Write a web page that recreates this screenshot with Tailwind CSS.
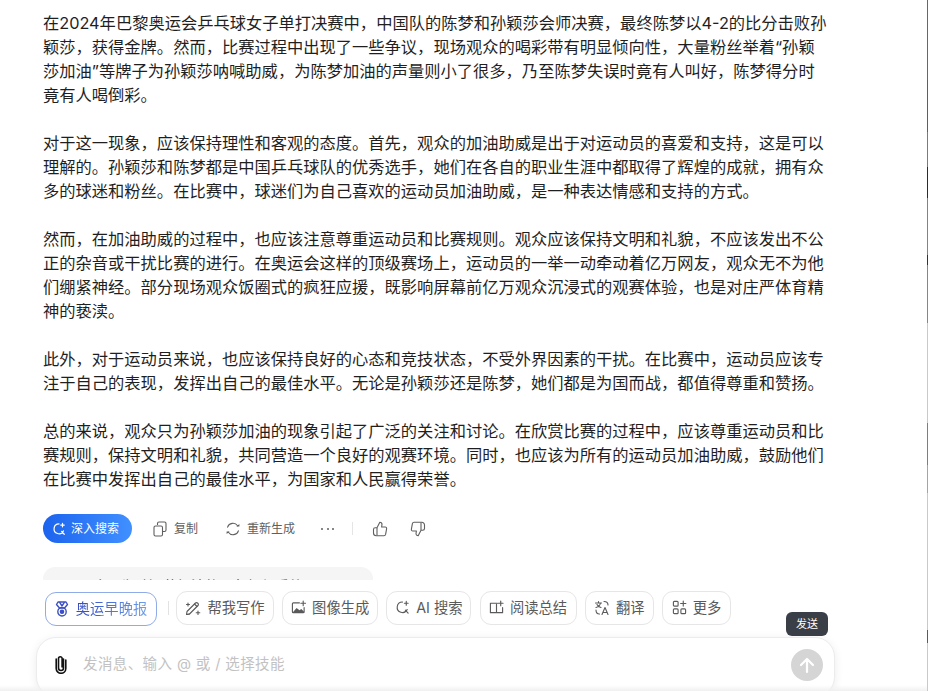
<!DOCTYPE html>
<html lang="zh-CN">
<head>
    <meta charset="UTF-8">
    <meta name="viewport" content="width=device-width, initial-scale=1.0">
    <title>观众只为孙颖莎加油</title>
    <script src="https://cdn.jsdelivr.net/npm/@tailwindcss/browser@4"></script>
</head>
<body class="relative h-[691px] w-[928px] overflow-hidden bg-white font-['Inter','Noto_Sans_CJK_SC',sans-serif] text-[#1f1f1f]">
    <!-- Answer -->
    <main class="w-[869px] pl-[43px] pt-[11px]">
        <div class="flex w-[785px] flex-col gap-6 text-[16.28px] leading-6">
            <p>在2024年巴黎奥运会乒乓球女子单打决赛中，中国队的陈梦和孙颖莎会师决赛，最终陈梦以4-2的比分击败孙颖莎，获得金牌。然而，比赛过程中出现了一些争议，现场观众的喝彩带有明显倾向性，大量粉丝举着“孙颖莎加油”等牌子为孙颖莎呐喊助威，为陈梦加油的声量则小了很多，乃至陈梦失误时竟有人叫好，陈梦得分时竟有人喝倒彩。</p>
            <p>对于这一现象，应该保持理性和客观的态度。首先，观众的加油助威是出于对运动员的喜爱和支持，这是可以理解的。孙颖莎和陈梦都是中国乒乓球队的优秀选手，她们在各自的职业生涯中都取得了辉煌的成就，拥有众多的球迷和粉丝。在比赛中，球迷们为自己喜欢的运动员加油助威，是一种表达情感和支持的方式。</p>
            <p>然而，在加油助威的过程中，也应该注意尊重运动员和比赛规则。观众应该保持文明和礼貌，不应该发出不公正的杂音或干扰比赛的进行。在奥运会这样的顶级赛场上，运动员的一举一动牵动着亿万网友，观众无不为他们绷紧神经。部分现场观众饭圈式的疯狂应援，既影响屏幕前亿万观众沉浸式的观赛体验，也是对庄严体育精神的亵渎。</p>
            <p>此外，对于运动员来说，也应该保持良好的心态和竞技状态，不受外界因素的干扰。在比赛中，运动员应该专注于自己的表现，发挥出自己的最佳水平。无论是孙颖莎还是陈梦，她们都是为国而战，都值得尊重和赞扬。</p>
            <p>总的来说，观众只为孙颖莎加油的现象引起了广泛的关注和讨论。在欣赏比赛的过程中，应该尊重运动员和比赛规则，保持文明和礼貌，共同营造一个良好的观赛环境。同时，也应该为所有的运动员加油助威，鼓励他们在比赛中发挥出自己的最佳水平，为国家和人民赢得荣誉。</p>
        </div>

        <!-- Actions -->
        <div class="mt-[23px] flex h-[29px] items-center text-xs text-[#5f5f5f]">
            <button class="flex h-[29px] w-[89px] items-center gap-[5px] rounded-full bg-linear-to-r from-[#1c63ee] to-[#4190ff] pl-[9px] text-white">
                <svg class="h-[14px] w-[14px]" viewBox="0 0 16 16" fill="none" stroke="currentColor" stroke-width="1.4" stroke-linecap="round"><path d="M8 2.2a5.6 5.6 0 1 0 5 8M11 10.8l3 3.2M12 1.5v4M10 3.5h4"/></svg>
                深入搜索
            </button>
            <button class="ml-[21px] flex items-center gap-[7px]">
                <svg class="h-[16px] w-[14px]" viewBox="0 0 14 16" fill="none" stroke="currentColor" stroke-width="1.1"><path d="M4.500 4V2.500A1.500 1.500 0 0 1 6 1h5.500A1.500 1.500 0 0 1 13 2.500V9a1.500 1.500 0 0 1-1.500 1.500H9.500"/><rect x="1" y="5" width="8.500" height="10" rx="1.500"/></svg>
                复制
            </button>
            <button class="ml-[27px] flex items-center gap-[6px]">
                <svg class="h-[16px] w-[16px]" viewBox="0 0 16 16" fill="none" stroke="currentColor" stroke-width="1.1" stroke-linecap="round"><path d="M2.600 6.200A5.600 5.600 0 0 1 12.600 4.800M13.400 9.800A5.600 5.600 0 0 1 3.400 11.200"/><path d="M11.400 5.600h3V3z" fill="currentColor" stroke="none"/><path d="M4.600 10.400h-3V13z" fill="currentColor" stroke="none"/></svg>
                重新生成
            </button>
            <button class="ml-[26px] flex w-[13px] justify-between">
                <span class="h-[2px] w-[2px] rounded-full bg-[#5f5f5f]"></span>
                <span class="h-[2px] w-[2px] rounded-full bg-[#5f5f5f]"></span>
                <span class="h-[2px] w-[2px] rounded-full bg-[#5f5f5f]"></span>
            </button>
            <span class="ml-[18px] h-[13px] w-px bg-[#e5e5e5]"></span>
            <button class="ml-[19px]">
                <svg class="block h-[16px] w-[16px]" viewBox="0 0 16 16" fill="none" stroke="#5f5f5f" stroke-width="1.1" stroke-linejoin="round"><path d="M1.500 8.500c0-1 .7-1.700 1.700-1.700H5L7.800 1.200c1.300 0 2.200 1 2.200 2.200L9.600 6h3.600c1 0 1.600.8 1.400 1.800l-1 5.600c-.2.800-.8 1.300-1.600 1.300H4.200a2.700 2.700 0 0 1-2.700-2.700z"/><path d="M5 7v7.600"/></svg>
            </button>
            <button class="ml-[22px]">
                <svg class="block h-[16px] w-[16px]" viewBox="0 0 16 16" fill="none" stroke="#5f5f5f" stroke-width="1.1" stroke-linejoin="round"><path d="M14.500 7.500c0 1-.7 1.700-1.700 1.700H11L8.200 14.800C6.900 14.800 6 13.800 6 12.600L6.400 10H2.800c-1 0-1.600-.8-1.400-1.800l1-5.600c.2-.8.800-1.300 1.600-1.300h7.800a2.700 2.700 0 0 1 2.700 2.700z"/><path d="M11 9V1.400"/></svg>
            </button>
        </div>

        <!-- Suggested question, cut off by the composer -->
        <div class="mt-[24px] h-[40px] w-[330px] rounded-xl bg-[#f5f5f5] pl-[36px] pt-[7px] text-sm leading-6 text-[#555]">观众只为孙颖莎加油的现象如何看待？</div>
    </main>

    <!-- Composer -->
    <div class="absolute inset-x-0 bottom-0 h-[111px] bg-white">
        <div class="flex items-center pl-[45px] pt-[9px] text-[14.3px] text-[#5a5a5a]">
            <button class="mt-[3px] flex h-[34px] w-[112px] items-center justify-center gap-[7px] rounded-[11px] border border-[#8fabe8]">
                <svg class="h-[16px] w-[14px]" viewBox="0 0 14 16" fill="none" stroke="#3c50c4" stroke-width="1.4" stroke-linejoin="round"><path d="M3 1h8l1.500 2.500L9.500 7h-5L1.500 3.500z"/><path d="M4.500 1.200 7 5l2.500-3.800"/><circle cx="7" cy="10.800" r="4.200"/><circle cx="7" cy="10.800" r="1.600" fill="#3c50c4"/></svg>
                <span class="bg-linear-to-r from-[#3548c0] to-[#6f9fe8] bg-clip-text text-transparent">奥运早晚报</span>
            </button>
            <span class="ml-[11px] mr-[7px] h-[14px] w-px bg-[#e2e2e2]"></span>
            <div class="flex gap-[8.2px]">
                <button class="flex h-[34px] w-[98px] items-center justify-center gap-[6px] rounded-[11px] border border-[#e6e6e6]">
                    <svg class="h-[16px] w-[16px]" viewBox="0 0 16 16" fill="none" stroke="currentColor" stroke-width="1.100" stroke-linecap="round" stroke-linejoin="round"><path d="M1.500 14.500 2 11.500 10.500 3a1.400 1.400 0 0 1 2 0l.5.5a1.400 1.400 0 0 1 0 2L4.500 14z"/><path d="M1.500 14.500 4.500 14M9.500 4l2.500 2.500M3 3v3M1.500 4.500h3M13 11v3.500M11.200 12.700h3.600"/></svg>
                    帮我写作
                </button>
                <button class="flex h-[34px] w-[96px] items-center justify-center gap-[6px] rounded-[11px] border border-[#e6e6e6]">
                    <svg class="h-[15px] w-[15px]" viewBox="0 0 16 16" fill="none" stroke="currentColor" stroke-width="1.200" stroke-linecap="round"><path d="M9 3H2.500A1 1 0 0 0 1.500 4v8.500a1 1 0 0 0 1 1h10.500a1 1 0 0 0 1-1V8"/><path d="M2 13l4-4.500 3 2.500 2-1.500 3 3v1H2z" fill="currentColor" stroke="none"/><path d="M13 1v5M10.500 3.500h5"/></svg>
                    图像生成
                </button>
                <button class="flex h-[34px] w-[85px] items-center justify-center gap-[6px] rounded-[11px] border border-[#e6e6e6]">
                    <svg class="h-[15px] w-[15px]" viewBox="0 0 16 16" fill="none" stroke="currentColor" stroke-width="1.200" stroke-linecap="round"><path d="M8 2.200a5.600 5.600 0 1 0 5 8M11 10.800l3 3.200M12 1.500v4M10 3.500h4"/></svg>
                    AI 搜索
                </button>
                <button class="flex h-[34px] w-[97px] items-center justify-center gap-[6px] rounded-[11px] border border-[#e6e6e6]">
                    <svg class="h-[15px] w-[15px]" viewBox="0 0 16 16" fill="none" stroke="currentColor" stroke-width="1.200" stroke-linecap="round" stroke-linejoin="round"><path d="M8 4.500v9M9 3.500H1.500v10h13V8M12.500 1v5M10 3.500h5"/></svg>
                    阅读总结
                </button>
                <button class="flex h-[34px] w-[69px] items-center justify-center gap-[6px] rounded-[11px] border border-[#e6e6e6]">
                    <svg class="h-[16px] w-[16px]" viewBox="0 0 16 16" fill="none" stroke="currentColor" stroke-width="1.100" stroke-linecap="round" stroke-linejoin="round"><path d="M1.500 3h6M4.500 1.500V3M6.500 3C6 5.500 4 7 2 7.500M3 4.500c.7 1.500 2 2.500 4 3M10 1.500c2.500 0 4 1.500 4 3.500M2 10c0 2.500 1.500 4 3.500 4M8 14.500l3-7 3 7M9 12.500h4"/></svg>
                    翻译
                </button>
                <button class="flex h-[34px] w-[69px] items-center justify-center gap-[6px] rounded-[11px] border border-[#e6e6e6]">
                    <svg class="h-[15px] w-[15px]" viewBox="0 0 16 16" fill="none" stroke="currentColor" stroke-width="1.200" stroke-linecap="round"><rect x="1.500" y="1.500" width="5" height="5" rx="1"/><rect x="1.500" y="9.500" width="5" height="5" rx="1"/><rect x="9.500" y="9.500" width="5" height="5" rx="1"/><path d="M12 1v5.500M9.200 3.700h5.600"/></svg>
                    更多
                </button>
            </div>
        </div>
        <div class="ml-[36px] mt-[11px] flex h-[60px] w-[799px] items-start rounded-[20px] border border-[#ececec] bg-white pl-[18px] pr-[11px] pt-[10px] shadow-[0_2px_10px_rgba(0,0,0,0.08)]">
            <svg class="mt-[6px] h-[20px] w-[12px]" viewBox="0 0 12 20" fill="none" stroke="#111" stroke-width="1.600" stroke-linecap="round"><path d="M8.500 5v9a2.500 2.500 0 0 1-5 0V4.500a1.800 1.800 0 0 1 3.600 0V13"/><path d="M10.800 6v8.500a4.800 4.800 0 0 1-9.600 0V5"/></svg>
            <span class="ml-[16px] mt-[6px] text-[14.5px] leading-5 tracking-[0.4px] text-[#c2c2c2]">发消息、输入 @ 或 / 选择技能</span>
            <button class="ml-auto mt-[1px] flex h-[32px] w-[32px] items-center justify-center rounded-full bg-[#d5d5d5]">
                <svg class="h-[20px] w-[20px]" viewBox="0 0 20 20" fill="none" stroke="#fff" stroke-width="2.200" stroke-linecap="round" stroke-linejoin="round"><path d="M10 17V4M4 10l6-6 6 6"/></svg>
            </button>
        </div>
    </div>

    <!-- Soft shade along the bottom edge -->
    <div class="absolute inset-x-0 bottom-0 h-[6px] bg-linear-to-b from-transparent to-[#f0f0f0]"></div>

    <!-- Send tooltip -->
    <div class="absolute left-[786px] top-[612px] flex h-[24px] w-[42px] items-center justify-center rounded-md bg-[#3a3e47] text-[11px] text-white">发送</div>

    <!-- Window behind, 1px showing at the right edge -->
    <div class="absolute right-0 top-0 flex h-[691px] w-px flex-col bg-[#c9c9c9]">
        <div class="h-[80px] bg-[#8a4f86]"></div>
        <div class="h-[52px] bg-[#a33a68]"></div>
        <div class="h-[35px] bg-[#7f7396]"></div>
        <div class="h-[31px] bg-[#2b2350]"></div>
        <div class="h-[57px] bg-[#8a7a9e]"></div>
        <div class="h-[10px] bg-[#3a2a45]"></div>
        <div class="h-[58px] bg-[#b0708a]"></div>
        <div class="h-[100px]"></div>
        <div class="h-[42px] bg-[#3a9aa0]"></div>
        <div class="h-[28px] bg-[#d89a50]"></div>
        <div class="h-[137px]"></div>
        <div class="h-[13px] bg-[#555c66]"></div>
    </div>
</body>
</html>
